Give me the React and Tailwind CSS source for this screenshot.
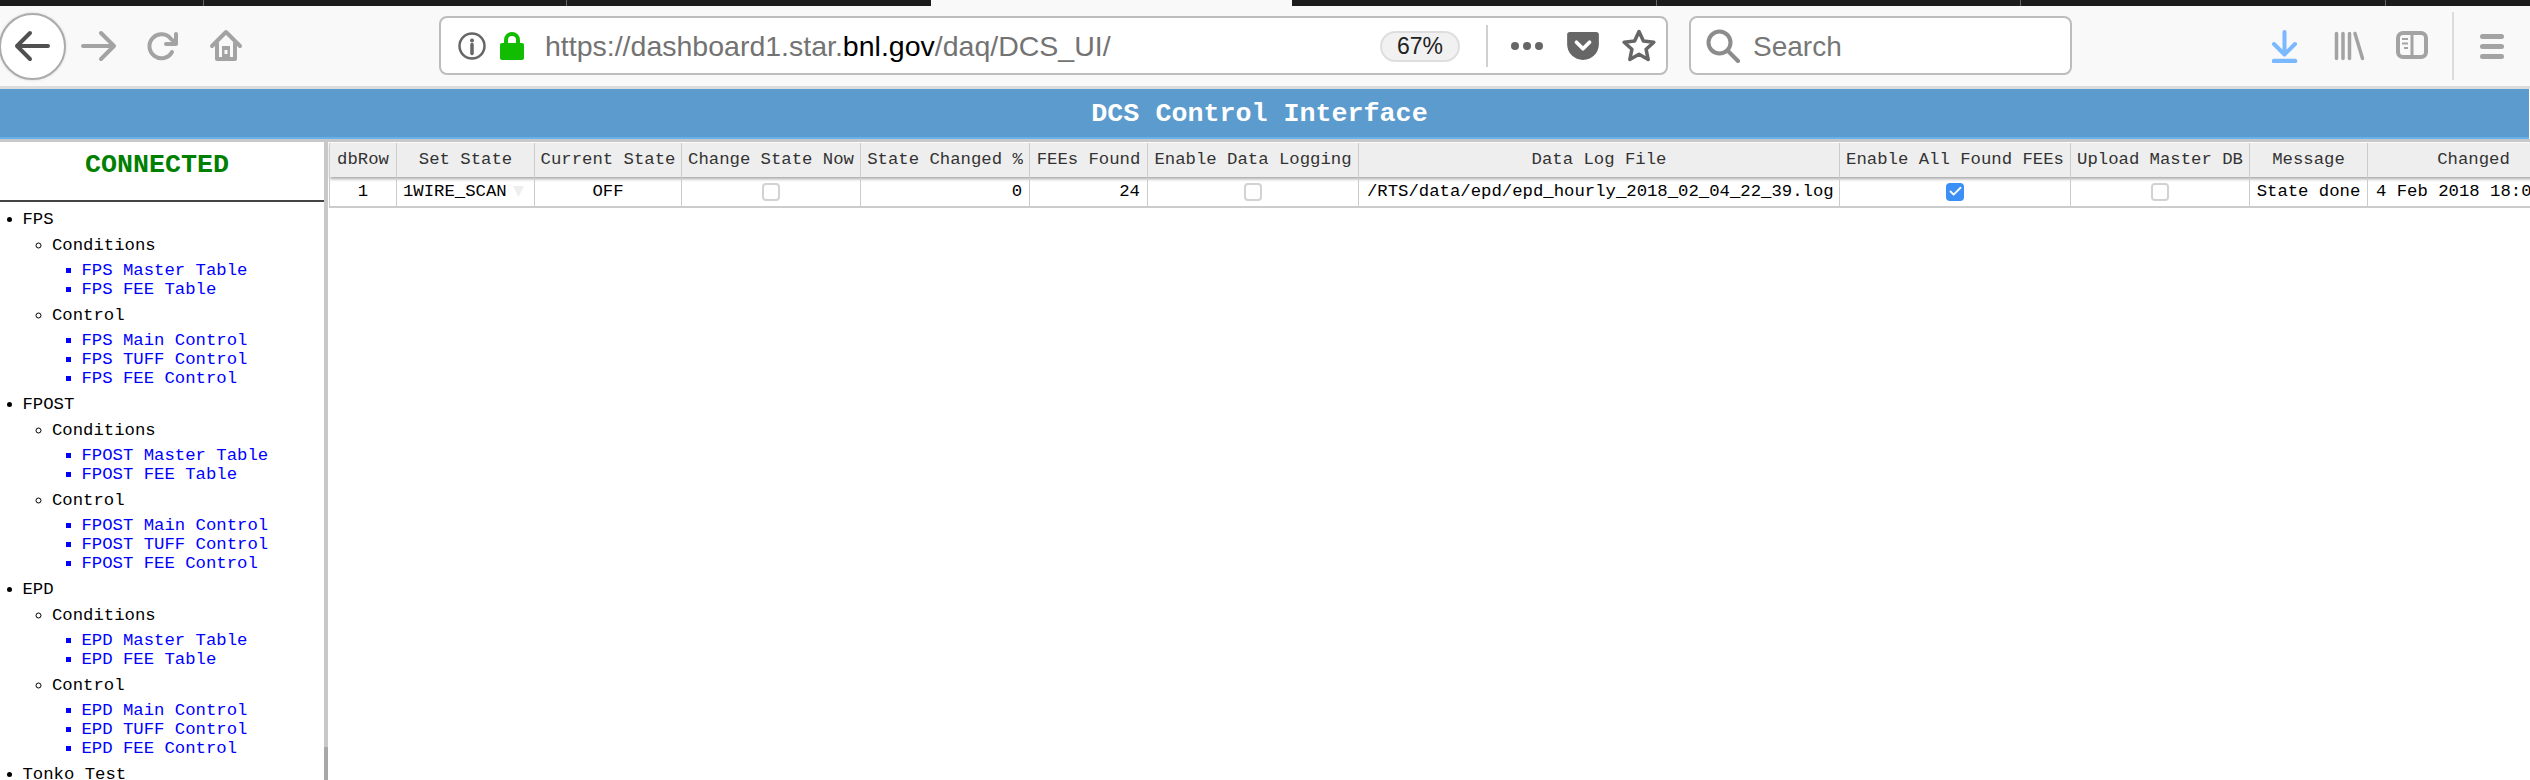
import { Check } from "lucide-react";

const columns = [
  { name: "dbRow", width: "w-[67px]" },
  { name: "Set State", width: "w-[138px]" },
  { name: "Current State", width: "w-[147px]" },
  { name: "Change State Now", width: "w-[179px]" },
  { name: "State Changed %", width: "w-[169px]" },
  { name: "FEEs Found", width: "w-[118px]" },
  { name: "Enable Data Logging", width: "w-[211px]" },
  { name: "Data Log File", width: "w-[481px]" },
  { name: "Enable All Found FEEs", width: "w-[231px]" },
  { name: "Upload Master DB", width: "w-[179px]" },
  { name: "Message", width: "w-[118px]" },
  { name: "Changed", width: "w-[212px]" },
];

const systems = [
  { name: "FPS", label: "FPS" },
  { name: "FPOST", label: "FPOST" },
  { name: "EPD", label: "EPD" },
];

function Checkbox({ checked }) {
  if (checked) {
    return (
      <span className="mx-auto flex h-[18px] w-[18px] items-center justify-center rounded-[4px] bg-[#3b8ff5]">
        <Check size={15} strokeWidth={3} className="text-white" />
      </span>
    );
  }
  return <span className="mx-auto block h-[18px] w-[18px] rounded-[4px] border-2 border-[#d2d2d2] bg-white" />;
}

function Toolbar() {
  return (
    <div className="relative flex h-[80px] w-full items-center bg-[#f9f9f9] font-['Liberation_Sans',sans-serif]">
      <div className="absolute left-[-1px] top-[7px] h-[67px] w-[67px] rounded-full border-2 border-[#ababab] bg-white shadow-[0_0_3px_rgba(0,0,0,0.15)]" />
      <svg className="absolute left-[14px] top-[24px]" width="36" height="32" viewBox="0 0 36 32" fill="none" stroke="#505050" strokeWidth="4" strokeLinecap="round" strokeLinejoin="round">
        <path d="M34 16H4M16 3 3 16l13 13" />
      </svg>
      <svg className="absolute left-[81px] top-[24px]" width="36" height="32" viewBox="0 0 36 32" fill="none" stroke="#a3a3a3" strokeWidth="4" strokeLinecap="round" strokeLinejoin="round">
        <path d="M2 16h30M20 3l13 13-13 13" />
      </svg>
      <svg className="absolute left-[147px] top-[25px]" width="32" height="32" viewBox="0 0 32 32" fill="none" stroke="#a3a3a3" strokeWidth="4" strokeLinecap="round" strokeLinejoin="round">
        <path d="M25 21a12 12 0 1 1-1-13l5 4" />
        <path d="M29 3v10H19" />
      </svg>
      <svg className="absolute left-[209px] top-[23px]" width="34" height="34" viewBox="0 0 34 34" fill="none" stroke="#a3a3a3" strokeWidth="4" strokeLinejoin="round" strokeLinecap="round">
        <path d="M3 17 17 3l14 14M8 14v16h18V14" />
        <rect x="13" y="17" width="8" height="13" fill="#a3a3a3" stroke="none" />
        <rect x="15.500" y="21" width="3" height="4" fill="#f9f9f9" stroke="none" />
      </svg>

      <div className="absolute left-[439px] top-[10px] flex h-[59px] w-[1229px] items-center rounded-[8px] border-2 border-[#bdbdbd] bg-white">
        <svg className="ml-[17px] shrink-0" width="28" height="28" viewBox="0 0 28 28" fill="none">
          <circle cx="14" cy="14" r="12.500" stroke="#666" strokeWidth="2.500" />
          <circle cx="14" cy="8.500" r="2" fill="#666" />
          <path d="M14 12.500v9" stroke="#666" strokeWidth="3.500" strokeLinecap="round" />
        </svg>
        <svg className="ml-[14px] shrink-0" width="24" height="28" viewBox="0 0 24 28">
          <path d="M6 12V8a6 6 0 0 1 12 0v4" fill="none" stroke="#12bc00" strokeWidth="4" />
          <rect x="0" y="11" width="24" height="17" rx="2" fill="#12bc00" />
        </svg>
        <span className="ml-[21px] pt-[2px] text-[28.5px] leading-none text-[#737373]">
          https://dashboard1.star.<span className="text-black">bnl.gov</span>/daq/DCS_UI/
        </span>
        <span className="absolute left-[939px] top-[13px] flex h-[31px] w-[80px] items-center justify-center rounded-full border-2 border-[#dedede] bg-[#f1f1f1] text-[23px] text-[#222]">
          67%
        </span>
        <span className="absolute left-[1045px] top-[7px] h-[42px] w-[2px] bg-[#d0d0d0]" />
        <span className="absolute left-[1070px] top-[24px] flex gap-[4px]">
          <i className="block h-[8px] w-[8px] rounded-full bg-[#666]" />
          <i className="block h-[8px] w-[8px] rounded-full bg-[#666]" />
          <i className="block h-[8px] w-[8px] rounded-full bg-[#666]" />
        </span>
        <svg className="absolute left-[1126px] top-[14px]" width="32" height="28" viewBox="0 0 34 30">
          <path d="M3 0h28a3 3 0 0 1 3 3v10a17 17 0 0 1-34 0V3a3 3 0 0 1 3-3z" fill="#666" />
          <path d="M10 11l7 7 7-7" fill="none" stroke="#fff" strokeWidth="4" strokeLinecap="round" strokeLinejoin="round" />
        </svg>
        <svg className="absolute left-[1181px] top-[11px]" width="34" height="33" viewBox="0 0 34 33" fill="none" stroke="#666" strokeWidth="3.500" strokeLinejoin="round">
          <path d="M17 2.500l4.400 9.600 10.400 1.200-7.700 7 2.100 10.200-9.200-5.200-9.200 5.200 2.100-10.200-7.700-7 10.400-1.200z" />
        </svg>
      </div>

      <div className="absolute left-[1689px] top-[10px] flex h-[59px] w-[383px] items-center rounded-[8px] border-2 border-[#bdbdbd] bg-white">
        <svg className="ml-[15px] shrink-0" width="34" height="34" viewBox="0 0 34 34" fill="none" stroke="#8c8c8c" strokeWidth="4" strokeLinecap="round">
          <circle cx="13.500" cy="13.500" r="11" />
          <path d="M22 22l10 10" />
        </svg>
        <span className="ml-[13px] pt-[2px] text-[28px] leading-none text-[#777]">Search</span>
      </div>

      <svg className="absolute left-[2272px] top-[24px]" width="27" height="33" viewBox="0 0 27 33" fill="none" stroke="#7ab8ff" strokeWidth="4" strokeLinecap="round" strokeLinejoin="round">
        <path d="M12.500 2v22M2 14l10.500 10.500L23 14" />
        <path d="M2 31h21" strokeWidth="4.500" />
      </svg>
      <svg className="absolute left-[2334px] top-[25px]" width="32" height="30" viewBox="0 0 32 30" fill="none" stroke="#a3a3a3" strokeWidth="3.500" strokeLinecap="round">
        <path d="M2.500 2.500v25M9 2.500v25M15.500 2.500v25M21 2.500l7.500 25" />
      </svg>
      <svg className="absolute left-[2396px] top-[25px]" width="32" height="28" viewBox="0 0 32 28" fill="none" stroke="#a3a3a3" strokeWidth="4">
        <rect x="2" y="2" width="28" height="24" rx="5" />
        <path d="M16 2v24" strokeWidth="3" />
        <path d="M6 8h6M6 12.500h6M8 17h4" strokeWidth="2" />
      </svg>
      <span className="absolute left-[2452px] top-[6px] h-[68px] w-[2px] bg-[#dcdcdc]" />
      <div className="absolute left-[2480px] top-[28px] flex w-[24px] flex-col gap-[5px]">
        <i className="block h-[5px] rounded-full bg-[#a3a3a3]" />
        <i className="block h-[5px] rounded-full bg-[#a3a3a3]" />
        <i className="block h-[5px] rounded-full bg-[#a3a3a3]" />
      </div>
    </div>
  );
}

function Link({ children }) {
  return <li className="text-[#0000ff]">{children}</li>;
}

function SystemMenu({ label }) {
  return (
    <li className="mb-[6.6px]">
      {label}
      <ul className="mt-[6.6px] list-[circle] pl-[29.5px]">
        <li>
          Conditions
          <ul className="mt-[6.6px] list-[square] pl-[29.5px]">
            <Link>{label} Master Table</Link>
            <Link>{label} FEE Table</Link>
          </ul>
        </li>
        <li className="mt-[6.6px]">
          Control
          <ul className="mt-[6.6px] list-[square] pl-[29.5px]">
            <Link>{label} Main Control</Link>
            <Link>{label} TUFF Control</Link>
            <Link>{label} FEE Control</Link>
          </ul>
        </li>
      </ul>
    </li>
  );
}

function Sidebar() {
  return (
    <div className="relative h-full w-[324px] shrink-0 overflow-hidden bg-white">
      <div className="flex h-[58px] items-center justify-center pb-[12px] pr-[10px] text-[26.7px] font-bold leading-none text-[#008000]">
        CONNECTED
      </div>
      <div className="h-[2px] bg-[#444]" />
      <ul className="mt-[8px] list-disc pl-[22.5px] text-[17.3px] leading-[19px] text-black">
        {systems.map((s) => (
          <SystemMenu key={s.name} label={s.label} />
        ))}
        <li>Tonko Test</li>
      </ul>
    </div>
  );
}

function DataTable() {
  return (
    <table className="w-[2250px] table-fixed border-collapse text-[17.3px] leading-none">
      <thead>
        <tr className="h-[34px] bg-[#eeeeee] text-[#333] shadow-[0_2px_3px_rgba(0,0,0,0.35)]">
          {columns.map((c) => (
            <th key={c.name} className={`${c.width} overflow-hidden whitespace-nowrap border-x border-[#cccccc] p-0 text-center font-normal`}>
              {c.name}
            </th>
          ))}
        </tr>
      </thead>
      <tbody>
        <tr className="h-[30px] border-b-2 border-[#cccccc] text-black">
          <td className="border-x border-[#cccccc] text-center">1</td>
          <td className="border-x border-[#cccccc] pl-[6px]">
            <div className="flex items-center justify-between pr-[10px]">
              <span>1WIRE_SCAN</span>
              <svg width="11" height="11" viewBox="0 0 11 11"><path d="M0 0h11L5.500 11z" fill="#eeeeee" /></svg>
            </div>
          </td>
          <td className="border-x border-[#cccccc] text-center">OFF</td>
          <td className="border-x border-[#cccccc]"><Checkbox /></td>
          <td className="border-x border-[#cccccc] pr-[7px] text-right">0</td>
          <td className="border-x border-[#cccccc] pr-[7px] text-right">24</td>
          <td className="border-x border-[#cccccc]"><Checkbox /></td>
          <td className="whitespace-nowrap border-x border-[#cccccc] pl-[8px]">/RTS/data/epd/epd_hourly_2018_02_04_22_39.log</td>
          <td className="border-x border-[#cccccc]"><Checkbox checked /></td>
          <td className="border-x border-[#cccccc]"><Checkbox /></td>
          <td className="border-x border-[#cccccc] text-center">State done</td>
          <td className="overflow-hidden whitespace-nowrap border-x border-[#cccccc] pl-[8px]">4 Feb 2018 18:0</td>
        </tr>
      </tbody>
    </table>
  );
}

export default function App() {
  return (
    <div className="h-[780px] w-[2530px] overflow-hidden bg-white font-['Liberation_Mono',monospace]">
      <div className="relative h-[6px] bg-[#1c1c1c]">
        <span className="absolute left-[203px] top-0 h-full w-[1px] bg-[#666]" />
        <span className="absolute left-[566px] top-0 h-full w-[1px] bg-[#666]" />
        <span className="absolute left-[931px] top-0 h-full w-[361px] bg-[#f9f9f9]" />
        <span className="absolute left-[1656px] top-0 h-full w-[1px] bg-[#666]" />
        <span className="absolute left-[2020px] top-0 h-full w-[1px] bg-[#666]" />
        <span className="absolute left-[2385px] top-0 h-full w-[1px] bg-[#666]" />
      </div>
      <Toolbar />
      <div className="h-[3px] bg-[#dcdcdc]" />
      <div className="flex h-[50px] w-[2529px] items-center justify-center border-b-2 border-[#67b0ea] bg-[#5b9bcd] pr-[10px] pt-[2px] text-[26.7px] font-bold leading-none text-white">
        DCS Control Interface
      </div>
      <div className="h-[3px] bg-[#c8c8c8]" />
      <div className="flex h-[638px]">
        <Sidebar />
        <div className="relative h-full w-[4px] shrink-0 bg-[#c8c8c8]">
          <div className="absolute bottom-0 h-[33px] w-full bg-[#a8a8a8]" />
        </div>
        <div className="min-w-0 flex-1 overflow-hidden pl-[1px] pt-[1px]">
          <DataTable />
        </div>
      </div>
    </div>
  );
}
